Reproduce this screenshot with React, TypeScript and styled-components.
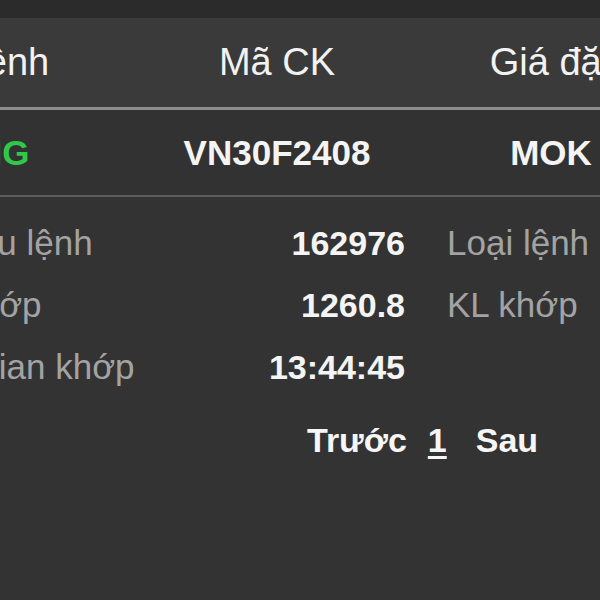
import * as React from 'react';
import styled, { createGlobalStyle } from 'styled-components';

const GlobalStyle = createGlobalStyle`
  html, body {
    margin: 0;
    padding: 0;
    background: #333333;
    overflow: hidden;
  }
  body {
    font-family: "Liberation Sans", Arial, sans-serif;
  }
`;

const Viewport = styled.div`
  width: 600px;
  height: 600px;
  overflow: hidden;
  background: #333333;
  display: flex;
  flex-direction: column;
`;

const TopStrip = styled.div`
  height: 18px;
  flex: none;
  background: #2b2b2b;
`;

// the order panel is wider than the window; its left part is scrolled out of view
const Panel = styled.div`
  width: 1000px;
  margin-left: -134px;
  display: flex;
  flex-direction: column;
`;

const TableRow = styled.div<{ $head?: boolean }>`
  display: grid;
  grid-template-columns: repeat(3, 274px);
  align-items: center;
  height: ${(p) => (p.$head ? '89px' : '85px')};
  background: ${(p) => (p.$head ? '#3a3a3a' : '#323232')};
  border-bottom: ${(p) => (p.$head ? '3px solid #8c8c8c' : '2px solid #5c5c5c')};
`;

const HeadCell = styled.div<{ $first?: boolean }>`
  text-align: center;
  white-space: nowrap;
  font-size: 38px;
  color: #f2f2f2;
  padding-left: ${(p) => (p.$first ? '8px' : '0')};
`;

const Cell = styled.div<{ $tone?: 'long' }>`
  text-align: center;
  white-space: nowrap;
  font-size: 35px;
  font-weight: bold;
  color: ${(p) => (p.$tone === 'long' ? '#2fc94a' : '#f4f4f4')};
  padding-right: ${(p) => (p.$tone === 'long' ? '48px' : '0')};
`;

const Details = styled.div`
  display: grid;
  grid-template-columns: 230px 235px 200px 150px;
  grid-auto-rows: 62px;
  column-gap: 42px;
  align-items: center;
  padding: 15px 0 0 32px;
`;

const Label = styled.div`
  font-size: 35px;
  color: #a3a3a3;
  white-space: nowrap;
`;

const Value = styled.div`
  font-size: 34px;
  font-weight: bold;
  color: #f4f4f4;
  text-align: right;
  white-space: nowrap;
`;

const Pager = styled.div`
  display: flex;
  align-items: center;
  height: 84px;
  padding-left: 441px;
  gap: 21px;
`;

const PageLink = styled.span<{ $current?: boolean }>`
  font-size: 34px;
  font-weight: bold;
  color: #f6f6f6;
  text-decoration: ${(p) => (p.$current ? 'underline' : 'none')};
  text-underline-offset: 4px;
  text-decoration-thickness: 3px;
  margin-right: ${(p) => (p.$current ? '8px' : '0')};
`;

const details = [
  ['Số hiệu lệnh', '162976', 'Loại lệnh', 'LO'],
  ['Giá khớp', '1260.8', 'KL khớp', '1'],
  ['Thời gian khớp', '13:44:45', '', ''],
];

export default function App() {
  return (
    <>
      <GlobalStyle />
      <Viewport>
        <TopStrip />
        <Panel>
          <TableRow $head>
            <HeadCell $first>Lệnh</HeadCell>
            <HeadCell>Mã CK</HeadCell>
            <HeadCell>Giá đặt</HeadCell>
          </TableRow>
          <TableRow>
            <Cell $tone="long">LONG</Cell>
            <Cell>VN30F2408</Cell>
            <Cell>MOK</Cell>
          </TableRow>
          <Details>
            {details.map(([l1, v1, l2, v2]) => (
              <React.Fragment key={l1}>
                <Label>{l1}</Label>
                <Value>{v1}</Value>
                <Label>{l2}</Label>
                <Value>{v2}</Value>
              </React.Fragment>
            ))}
          </Details>
          <Pager>
            <PageLink>Trước</PageLink>
            <PageLink $current>1</PageLink>
            <PageLink>Sau</PageLink>
          </Pager>
        </Panel>
      </Viewport>
    </>
  );
}
